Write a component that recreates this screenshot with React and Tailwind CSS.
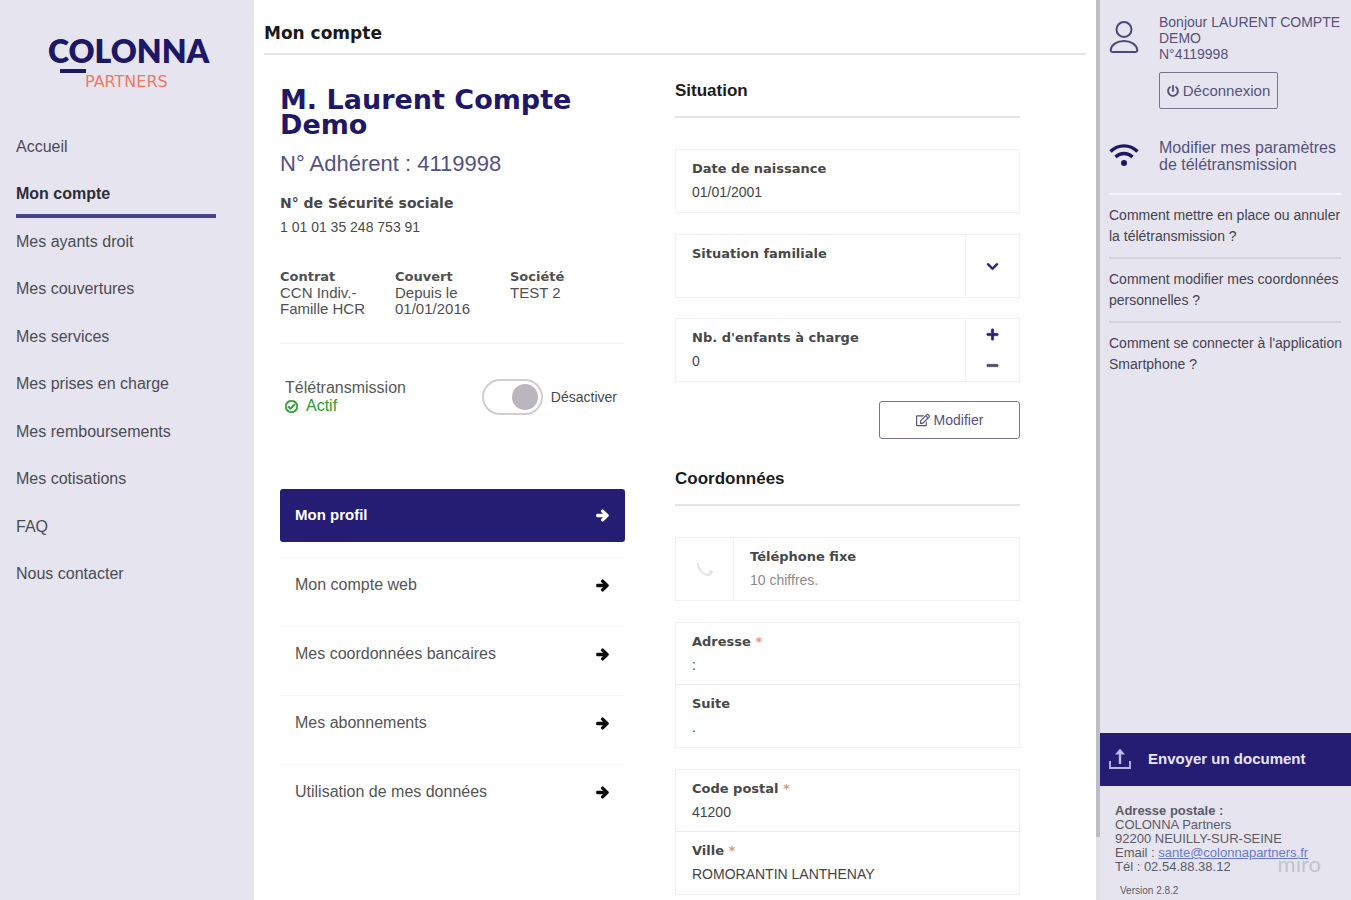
import { useState } from 'react'
import { FaArrowRight, FaChevronDown, FaPlus, FaMinus, FaPowerOff, FaRegEdit, FaRegCheckCircle } from 'react-icons/fa'

const navItems = [
  'Accueil',
  'Mon compte',
  'Mes ayants droit',
  'Mes couvertures',
  'Mes services',
  'Mes prises en charge',
  'Mes remboursements',
  'Mes cotisations',
  'FAQ',
  'Nous contacter',
]

const profileLinks = ['Mon compte web', 'Mes coordonnées bancaires', 'Mes abonnements', 'Utilisation de mes données']

const contract = [
  { title: 'Contrat', lines: ['CCN Indiv.-', 'Famille HCR'] },
  { title: 'Couvert', lines: ['Depuis le', '01/01/2016'] },
  { title: 'Société', lines: ['TEST 2'] },
]

const questions = [
  'Comment mettre en place ou annuler la télétransmission ?',
  'Comment modifier mes coordonnées personnelles ?',
  "Comment se connecter à l'application Smartphone ?",
]

function Logo() {
  return (
    <svg width="176" height="70" viewBox="0 0 176 70" className="ml-[48px]" role="img" aria-label="Colonna Partners">
      <text x="0" y="39" className="fill-[#1c1766] font-['Lato',sans-serif] text-[32px] font-extrabold">
        COLONNA
      </text>
      <rect x="12" y="45" width="26" height="4" fill="#1c1766" />
      <text x="37" y="63" className="fill-[#ec7a62] font-['DejaVu_Sans',sans-serif] text-[16px]">
        PARTNERS
      </text>
    </svg>
  )
}

function UserIcon() {
  return (
    <svg width="30" height="34" viewBox="0 0 30 34" fill="none" stroke="#4a4780" strokeWidth="2">
      <circle cx="15" cy="9.500" r="7.500" />
      <path d="M3.500 32h23c1.500 0 2-1 1.700-2.500C27.300 24.500 22 21 15 21S2.700 24.500 1.800 29.500C1.500 31 2 32 3.500 32z" />
    </svg>
  )
}

function WifiIcon() {
  return (
    <svg width="30" height="24" viewBox="0 0 30 24" fill="none" stroke="#1d1766" strokeWidth="3.400">
      <path d="M1.500 8.500C9 1 21 1 28.500 8.500" />
      <path d="M6.500 14c4.800-4.600 12.200-4.600 17 0" />
      <circle cx="15" cy="20" r="3" fill="#1d1766" stroke="none" />
    </svg>
  )
}

function UploadIcon() {
  return (
    <svg width="22" height="22" viewBox="0 0 22 22" fill="none" stroke="#bdb9e4" strokeWidth="1.800">
      <path d="M1 12v7h20v-7" />
      <path d="M11 15V4" strokeWidth="2.400" />
      <path d="M8 4.500L11 1l3 3.500z" fill="#dcdaf2" />
    </svg>
  )
}

function Arrow({ className }) {
  return <FaArrowRight size={13} stroke="currentColor" strokeWidth={50} className={className} />
}

function SectionTitle({ children }) {
  return (
    <h2 className="border-b-2 border-[#e4e4e4] pb-[13px] text-[17px] leading-6 font-bold text-[#1c1c1c]">{children}</h2>
  )
}

function Field({ id, label, required, children, ...props }) {
  return (
    <div className="flex h-[62px]">
      <div className="min-w-0 flex-1 px-4 pt-[7px]">
        <label htmlFor={id} className="block font-['DejaVu_Sans',sans-serif] text-[13px] leading-[23px] font-bold text-[#484848]">
          {label} {required && <span className="text-[#d99a7c]">*</span>}
        </label>
        <input
          id={id}
          className="block h-[23px] w-full bg-transparent text-[14px] text-[#444] outline-none placeholder:text-[#8b8b8b]"
          {...props}
        />
      </div>
      {children}
    </div>
  )
}

export default function App() {
  const [children, setChildren] = useState(0)
  const [active, setActive] = useState(true)

  return (
    <div className="flex min-h-screen bg-white font-['Liberation_Sans',Arial,sans-serif]">
      <aside className="w-[254px] shrink-0 bg-[#e6e5ef] pt-6">
        <Logo />
        <nav className="mt-[41px] flex h-[451px] flex-col justify-between px-4">
          {navItems.map((item) =>
            item === 'Mon compte' ? (
              <a
                key={item}
                href="#"
                className="relative w-[200px] text-base leading-6 font-bold text-[#2c2c38] after:absolute after:top-[32px] after:left-0 after:h-1 after:w-full after:bg-[#48438a]"
              >
                {item}
              </a>
            ) : (
              <a key={item} href="#" className="text-base leading-6 text-[#4b4b55]">
                {item}
              </a>
            )
          )}
        </nav>
      </aside>

      <main className="min-w-0 flex-1 pr-[10px] pl-[10px]">
        <h1 className="border-b-2 border-[#e6e6e6] pt-[22px] pb-[9px] font-['DejaVu_Sans',sans-serif] text-[17px] leading-[22px] font-bold text-[#1a1a1a]">
          Mon compte
        </h1>

        <div className="grid grid-cols-2 gap-[50px] pr-[66px] pl-4">
          <section>
            <h2 className="pt-8 font-['DejaVu_Sans',sans-serif] text-[27px] leading-[25px] font-bold text-[#1f1869]">
              M. Laurent Compte Demo
            </h2>
            <p className="mt-[13px] text-[22px] leading-7 text-[#55527f]">N° Adhérent : 4119998</p>
            <p className="mt-[13px] font-['DejaVu_Sans',sans-serif] text-[14px] leading-6 font-bold text-[#484848]">
              N° de Sécurité sociale
            </p>
            <p className="text-[14px] leading-6 text-[#4a4a4a]">1 01 01 35 248 753 91</p>

            <dl className="mt-[30px] grid grid-cols-3 text-[15px] leading-4 text-[#505050]">
              {contract.map((c) => (
                <div key={c.title}>
                  <dt className="font-['DejaVu_Sans',sans-serif] text-[13px] font-bold">{c.title}</dt>
                  {c.lines.map((line) => (
                    <dd key={line}>{line}</dd>
                  ))}
                </div>
              ))}
            </dl>
            <hr className="mt-[26px] border-[#f3f3f3]" />

            <div className="mt-[35px] flex items-center justify-between pr-2 pl-[5px]">
              <div className="text-base leading-[18px] text-[#585858]">
                <p>Télétransmission</p>
                <p className="flex items-center gap-2 text-[#2f9a35]">
                  <FaRegCheckCircle size={13} stroke="currentColor" strokeWidth={30} /> Actif
                </p>
              </div>
              <label className="flex items-center gap-2 text-[14px] text-[#484848]">
                <input
                  type="checkbox"
                  role="switch"
                  checked={active}
                  onChange={(e) => setActive(e.target.checked)}
                  className="flex h-9 w-[61px] appearance-none items-center rounded-full border-2 border-[#cfcdd4] bg-white before:ml-[2px] before:size-[26px] before:rounded-full before:bg-[#b9b6bd] checked:before:ml-[28px]"
                />
                Désactiver
              </label>
            </div>

            <a
              href="#"
              className="mt-[74px] flex h-[53px] items-center justify-between rounded-[3px] bg-[#241d73] pr-4 pl-[15px] text-[15px] font-bold text-white"
            >
              Mon profil
              <Arrow />
            </a>
            <ul className="mt-[15px]">
              {profileLinks.map((link) => (
                <li key={link} className="h-[69px] border-t border-[#f4f4f4] pt-[15px]">
                  <a href="#" className="flex items-center justify-between pr-4 pl-[15px] text-base leading-6 text-[#555]">
                    {link}
                    <Arrow className="text-[#0c0c0c]" />
                  </a>
                </li>
              ))}
            </ul>
          </section>

          <section className="pt-6">
            <SectionTitle>Situation</SectionTitle>
            <div className="mt-[31px] border border-[#efefef]">
              <Field id="birth" label="Date de naissance" defaultValue="01/01/2001" />
            </div>

            <div className="mt-[21px] flex h-[64px] border border-[#efefef]">
              <div className="flex-1 px-4 pt-[7px]">
                <label
                  htmlFor="family"
                  className="block font-['DejaVu_Sans',sans-serif] text-[13px] leading-[23px] font-bold text-[#484848]"
                >
                  Situation familiale
                </label>
                <select id="family" defaultValue="" className="block h-[23px] w-full appearance-none bg-transparent text-[14px] outline-none">
                  <option value=""></option>
                  <option>Célibataire</option>
                  <option>Marié(e)</option>
                </select>
              </div>
              <div className="flex w-[54px] items-center justify-center border-l border-[#f0f0f0]">
                <FaChevronDown size={13} stroke="currentColor" strokeWidth={20} className="text-[#2a2468]" />
              </div>
            </div>

            <div className="mt-5 border border-[#efefef]">
              <Field
                id="kids"
                label="Nb. d'enfants à charge"
                value={children}
                onChange={(e) => setChildren(Number(e.target.value) || 0)}
              >
                <div className="flex w-[54px] flex-col border-l border-[#f0f0f0] text-[#2a2468]">
                  <button
                    aria-label="Ajouter un enfant"
                    onClick={() => setChildren(children + 1)}
                    className="flex flex-1 items-center justify-center"
                  >
                    <FaPlus size={13} stroke="currentColor" strokeWidth={20} />
                  </button>
                  <button
                    aria-label="Retirer un enfant"
                    onClick={() => setChildren(Math.max(0, children - 1))}
                    className="flex flex-1 items-center justify-center text-[#4c4a60]"
                  >
                    <FaMinus size={13} stroke="currentColor" strokeWidth={20} />
                  </button>
                </div>
              </Field>
            </div>

            <button className="mt-[19px] ml-auto flex h-[38px] w-[141px] items-center justify-center gap-1 rounded-[3px] border border-[#77748f] text-[14px] text-[#55517f]">
              <FaRegEdit size={14} />
              Modifier
            </button>

            <div className="mt-[28px]">
              <SectionTitle>Coordonnées</SectionTitle>
            </div>
            <div className="mt-[31px] flex border border-[#efefef]">
              <div className="flex w-[58px] items-center justify-center border-r border-[#efefef]">
                <svg width="20" height="20" viewBox="0 0 20 20" fill="none" stroke="#e3e3e3" strokeWidth="2">
                  <path d="M3 4c0 7 5 12 11 12l3-3-3-1" />
                </svg>
              </div>
              <div className="flex-1">
                <Field id="phone" label="Téléphone fixe" placeholder="10 chiffres." />
              </div>
            </div>

            <div className="mt-[21px] divide-y divide-[#ebebeb] border border-[#efefef]">
              <Field id="address" label="Adresse" required defaultValue=":" />
              <Field id="address2" label="Suite" defaultValue="." />
            </div>

            <div className="mt-[21px] divide-y divide-[#ebebeb] border border-[#efefef]">
              <Field id="zip" label="Code postal" required defaultValue="41200" />
              <Field id="city" label="Ville" required defaultValue="ROMORANTIN LANTHENAY" />
            </div>
          </section>
        </div>
      </main>

      <div className="w-1 shrink-0 bg-[#e2e1ea]">
        <div className="h-[93vh] bg-[#bdbdc4]" />
      </div>
      <aside className="flex w-[251px] shrink-0 flex-col bg-[#e6e5ef] text-[#55527c]">
        <div className="flex pt-[14px] pl-[9px] text-[14px] leading-4">
          <div className="w-[50px] shrink-0 pt-[6px]">
            <UserIcon />
          </div>
          <div>
            <p>
              Bonjour LAURENT COMPTE DEMO
              <br />
              N°4119998
            </p>
            <button className="mt-[10px] flex h-[37px] w-[119px] items-center justify-center gap-1 rounded-[2px] border border-[#77748f] text-[15px]">
              <FaPowerOff size={12} />
              Déconnexion
            </button>
          </div>
        </div>
        <a href="#" className="mt-[30px] flex pl-[9px] text-base leading-[17px]">
          <span className="w-[50px] shrink-0 pt-1">
            <WifiIcon />
          </span>
          Modifier mes paramètres de télétransmission
        </a>

        <ul className="mt-5 pr-[10px] pl-[9px]">
          {questions.map((q) => (
            <li key={q} className="border-t-2 border-[#d3d2db] py-[10px] text-[14px] leading-[21px] text-[#44434f] first:border-[#f6f6fa]">
              <a href="#" className="-mr-2 block">
                {q}
              </a>
            </li>
          ))}
        </ul>

        <button className="mt-auto flex h-[53px] items-center gap-[17px] bg-[#241d73] pl-[9px] text-[15px] font-bold text-[#e9e8f4]">
          <UploadIcon />
          Envoyer un document
        </button>
        <address className="relative pt-[18px] pb-[2px] pl-[15px] text-[13px] leading-[14px] text-[#5b5a66] not-italic">
          <p className="font-bold">Adresse postale :</p>
          <p>COLONNA Partners</p>
          <p>92200 NEUILLY-SUR-SEINE</p>
          <p>
            Email :{' '}
            <a href="mailto:sante@colonnapartners.fr" className="text-[#6878cc] underline">
              sante@colonnapartners.fr
            </a>
          </p>
          <p>Tél : 02.54.88.38.12</p>
          <p className="mt-[10px] pl-[5px] text-[10px]">Version 2.8.2</p>
          <span className="absolute top-[70px] right-[30px] font-['Lato',sans-serif] text-[22px] leading-4 text-[#c3c2d0]">
            miro
          </span>
        </address>
      </aside>
    </div>
  )
}
